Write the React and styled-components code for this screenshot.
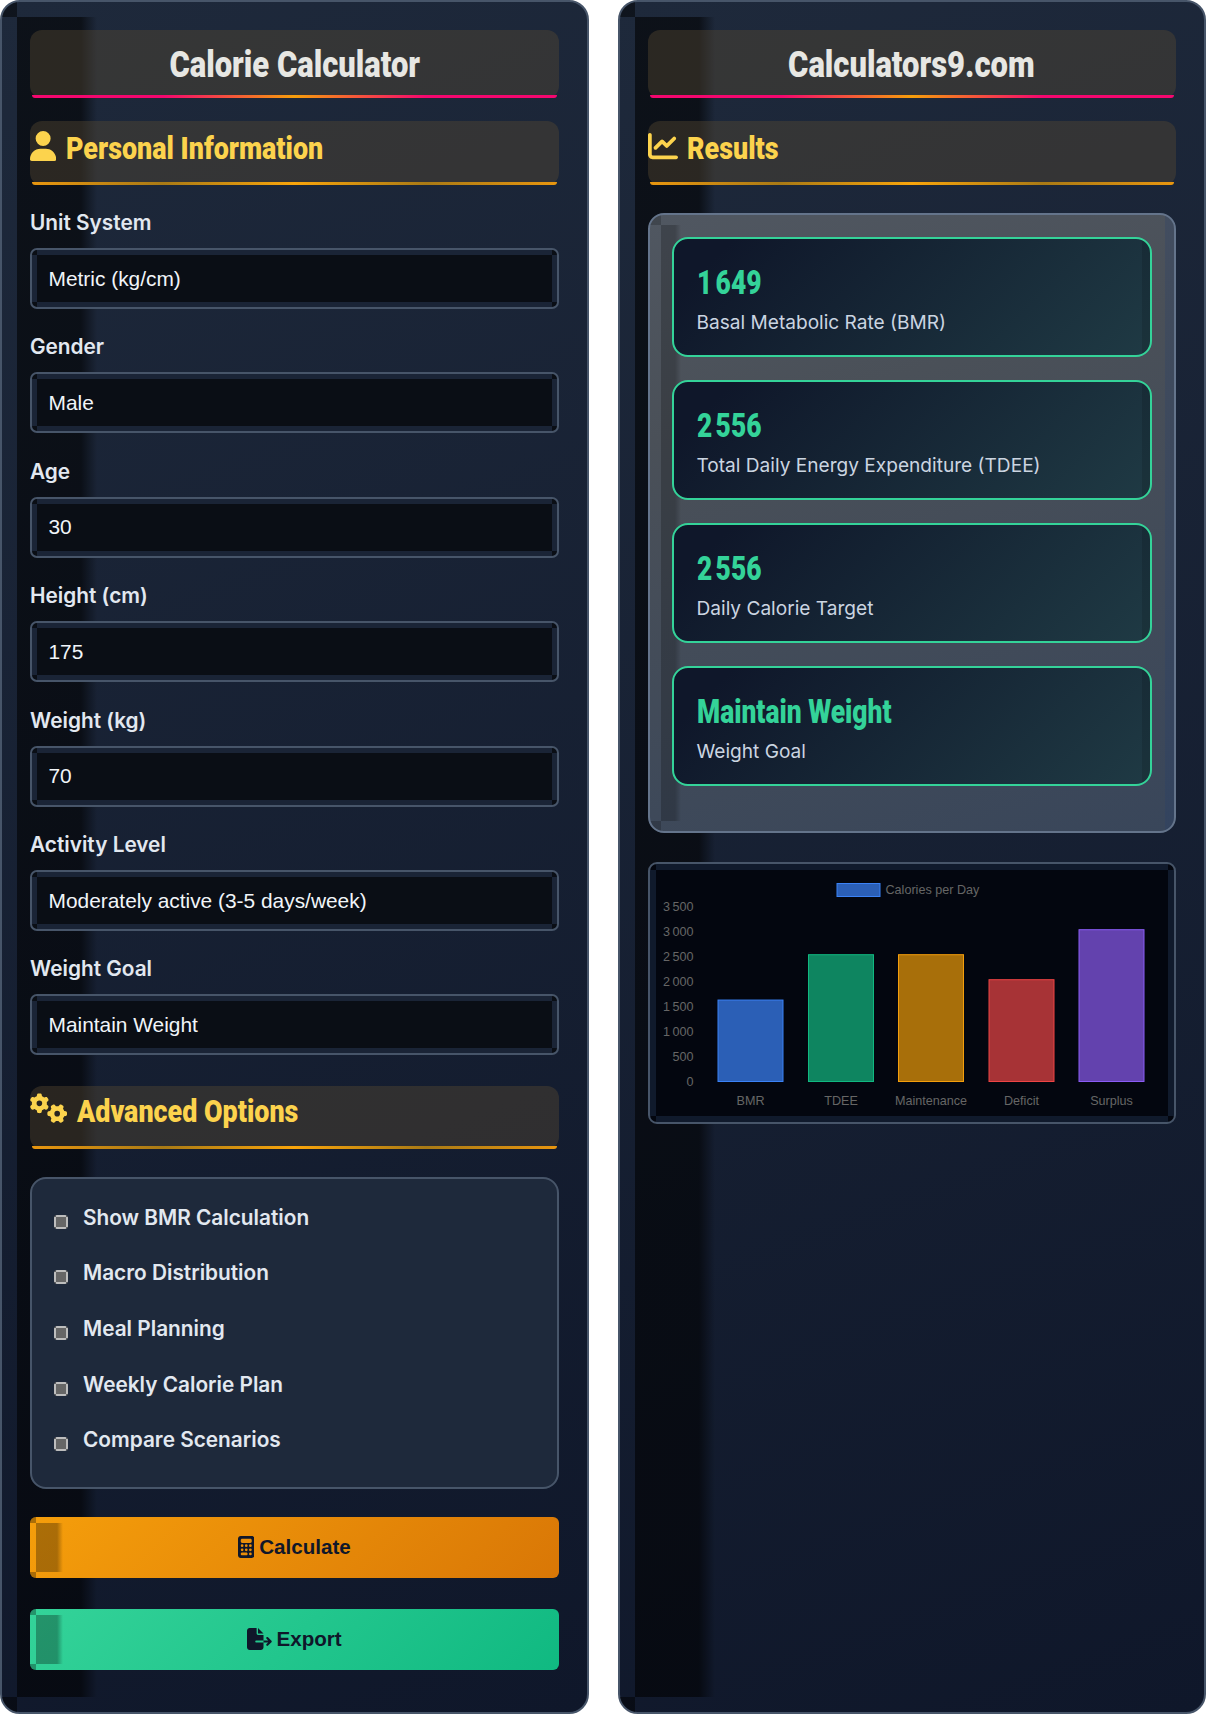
import React from 'react';
import styled, { createGlobalStyle, css } from 'styled-components';
import { FaUser, FaGears, FaChartLine, FaCalculator, FaFileExport } from 'react-icons/fa6';

const GlobalStyle = createGlobalStyle`
  * { box-sizing: border-box; }
  body {
    margin: 0;
    background: #fff;
    font-family: Inter, "Liberation Sans", sans-serif;
  }
`;

// the four edge bands, the corners keep the dark base colour
const edgeStrips = (color, w) => css`
  background-image:
    linear-gradient(${color}, ${color}),
    linear-gradient(${color}, ${color}),
    linear-gradient(${color}, ${color}),
    linear-gradient(${color}, ${color});
  background-repeat: no-repeat;
  background-position: top center, bottom center, left center, right center;
  background-size:
    calc(100% - ${w * 2}px) ${w}px,
    calc(100% - ${w * 2}px) ${w}px,
    ${w}px calc(100% - ${w * 2}px),
    ${w}px calc(100% - ${w * 2}px);
`;

const Page = styled.div`
  display: flex;
  gap: 29px;
  width: 1206px;
  min-height: 1714px;
`;

const Panel = styled.section`
  position: relative;
  flex: 1;
  height: 1714px;
  padding: 28px 28px 42px;
  border: 2px solid #475569;
  border-radius: 20px;
  overflow: hidden;
  background: linear-gradient(160deg, #1e293b 0%, #0f172a 100%);

  &::before {
    content: "";
    position: absolute;
    inset: 0;
    background:
      linear-gradient(rgba(0, 0, 0, 0.5), rgba(0, 0, 0, 0.5)) 0 0 / 15px 15px no-repeat,
      linear-gradient(rgba(0, 0, 0, 0.5), rgba(0, 0, 0, 0.5)) 0 100% / 15px 15px no-repeat,
      linear-gradient(90deg, rgba(0, 0, 0, 0.58) 80%, rgba(0, 0, 0, 0) 100%) 15px 15px / 80px calc(100% - 30px) no-repeat;
  }

  & > * {
    position: relative;
  }
`;

const Condensed = styled.span`
  display: inline-block;
  white-space: nowrap;
  transform: scaleX(${(p) => p.$sx || 0.82});
  transform-origin: ${(p) => p.$origin || 'left'} center;
`;

const Title = styled.h1`
  position: relative;
  height: 68px;
  margin: 0 0 23px;
  padding-top: 12px;
  border-radius: 12px;
  background: rgba(91, 75, 50, 0.4);
  color: #e7e7e3;
  font-family: Roboto, sans-serif;
  font-size: 36px;
  font-weight: 900;
  line-height: 46px;
  text-align: center;

  &::after {
    content: "";
    position: absolute;
    left: 2px;
    right: 2px;
    bottom: 0;
    height: 3px;
    border-radius: 0 0 12px 12px;
    background: linear-gradient(90deg, #f5076f 0%, #f5076f 25%, #f59e0b 50%, #f5076f 75%, #f5076f 100%);
  }
`;

const SectionTitle = styled.h2`
  position: relative;
  display: flex;
  align-items: flex-start;
  gap: 9.5px;
  height: ${(p) => (p.$short ? 63 : 64)}px;
  margin: ${(p) => (p.$short ? '30.4px 0 28px' : '0 0 24px')};
  padding-top: ${(p) => (p.$short ? 5 : 7)}px;
  border-radius: 12px;
  background: rgba(91, 75, 50, 0.4);
  color: #fcd34d;
  font-family: Roboto, sans-serif;
  font-size: 32px;
  font-weight: 900;
  line-height: 40px;

  svg {
    flex: none;
    width: ${(p) => p.$iconWidth}px;
    height: 30px;
    margin-top: ${(p) => (p.$short ? 2 : 3)}px;
  }

  &::after {
    content: "";
    position: absolute;
    left: 2px;
    right: 2px;
    bottom: 0;
    height: 3px;
    border-radius: 0 0 12px 12px;
    background: linear-gradient(90deg, #e8960f 0%, #a97a15 25%, #f9a50b 50%, #a97a15 75%, #e8960f 100%);
  }
`;

const Group = styled.div`
  margin-bottom: 24.4px;
`;

const Label = styled.label`
  display: block;
  height: 26px;
  margin-bottom: 13px;
  color: #e2e8f0;
  font-size: 20.8px;
  font-weight: 600;
  line-height: 28px;
`;

const Field = styled.input`
  display: block;
  width: 100%;
  height: 61px;
  padding: 0 16.5px;
  border: 2px solid #475569;
  border-radius: 7px;
  outline: none;
  appearance: none;
  background-color: #0a0e15;
  ${edgeStrips('#1a2436', 5)}
  color: #f1f5f9;
  font-family: "Liberation Sans", Arial, sans-serif;
  font-size: 20.9px;
`;

const Choice = styled(Field).attrs({ as: 'select' })``;

const OptionsCard = styled.div`
  height: 312px;
  margin-bottom: 28px;
  padding: 23px 22px 0;
  border: 2px solid #475569;
  border-radius: 16px;
  background: #1e293b;
`;

const OptionRow = styled.label`
  display: flex;
  gap: 15px;
  height: 32px;
  margin-bottom: 23.6px;
  color: #e2e8f0;
  font-size: 20.8px;
  font-weight: 600;
  line-height: 32px;
`;

const Check = styled.input.attrs({ type: 'checkbox' })`
  flex: none;
  width: 14px;
  height: 14px;
  margin: 13px 0 0;
  appearance: none;
  border-radius: 3px;
  background-color: #666;
  ${edgeStrips('#bdbdbd', 2)}
`;

const ActionButton = styled.button`
  position: relative;
  display: flex;
  align-items: center;
  justify-content: center;
  gap: 5px;
  width: 100%;
  height: 61.5px;
  margin-bottom: 30.5px;
  padding: 0;
  border: none;
  border-radius: 6px;
  overflow: hidden;
  background: linear-gradient(135deg, ${(p) => p.$from}, ${(p) => p.$to});
  color: #0f172a;
  font-family: "Liberation Sans", Arial, sans-serif;
  font-size: 20.6px;
  font-weight: 700;

  svg {
    width: ${(p) => p.$iconWidth}px;
    height: 22px;
  }

  &::before {
    content: "";
    position: absolute;
    inset: 0;
    background:
      linear-gradient(rgba(0, 0, 0, 0.3), rgba(0, 0, 0, 0.3)) 0 0 / 6px 6px no-repeat,
      linear-gradient(rgba(0, 0, 0, 0.3), rgba(0, 0, 0, 0.3)) 0 100% / 6px 6px no-repeat,
      linear-gradient(90deg, rgba(0, 0, 0, 0.3) 78%, rgba(0, 0, 0, 0) 100%) 6px 6px / 27px calc(100% - 12px) no-repeat;
  }
`;

const ResultsBox = styled.div`
  position: relative;
  height: 620px;
  margin: 28px 0 29px;
  padding: 22px 22.5px 0;
  border: 2px solid #64748b;
  border-radius: 16px;
  overflow: hidden;
  background: linear-gradient(165deg, #505761 0%, #4a5058 30%, #39465a 100%);

  &::before {
    content: "";
    position: absolute;
    inset: 0;
    background:
      linear-gradient(rgba(0, 0, 0, 0.2), rgba(0, 0, 0, 0.2)) 0 0 / 11px 10px no-repeat,
      linear-gradient(rgba(0, 0, 0, 0.2), rgba(0, 0, 0, 0.2)) 0 100% / 11px 10px no-repeat,
      linear-gradient(90deg, rgba(0, 0, 0, 0.22) 70%, rgba(0, 0, 0, 0) 100%) 11px 10px / 20px calc(100% - 20px) no-repeat,
      linear-gradient(rgba(30, 58, 110, 0.22), rgba(30, 58, 110, 0.22)) 100% 0 / 9px 100% no-repeat;
  }
`;

const ResultCard = styled.div`
  position: relative;
  height: 120px;
  margin-bottom: 23px;
  padding: 24px 22.5px 0;
  border: 2px solid #34d399;
  border-radius: 16px;
  overflow: hidden;
  background: linear-gradient(135deg, #0f172a 0%, #0f172a 10%, #1f3a44 100%);

  &::after {
    content: "";
    position: absolute;
    top: 0;
    bottom: 0;
    right: 0;
    width: 8px;
    background: rgba(0, 0, 0, 0.12);
  }
`;

const ResultValue = styled.div`
  height: 40px;
  color: #34d399;
  font-family: Roboto, sans-serif;
  font-size: 33px;
  font-weight: 900;
  line-height: 40px;
`;

const ResultLabel = styled.div`
  margin-top: 4.5px;
  color: #cbd5e1;
  font-size: 19.1px;
  line-height: 28px;
`;

const ChartBox = styled.div`
  height: 262px;
  border: 2px solid #475569;
  border-radius: 9px;
  overflow: hidden;
  background-color: #03060f;
  ${edgeStrips('#101a2c', 6)}

  svg {
    display: block;
  }

  text {
    fill: #666;
    font-family: "Liberation Sans", Arial, sans-serif;
    font-size: 12.6px;
  }
`;

const bars = [
  { name: 'BMR', value: 1649, x: 68, fill: '#2b5fb6', stroke: '#3b82f6' },
  { name: 'TDEE', value: 2556, x: 158.5, fill: '#0e8560', stroke: '#10b981' },
  { name: 'Maintenance', value: 2556, x: 248.5, fill: '#a86f0a', stroke: '#f59e0b' },
  { name: 'Deficit', value: 2056, x: 339, fill: '#a73336', stroke: '#ef4444' },
  { name: 'Surplus', value: 3056, x: 429, fill: '#6342ae', stroke: '#8b5cf6' },
];

const ticks = [0, 500, 1000, 1500, 2000, 2500, 3000, 3500];
const baseY = 217.5;
const toY = (v) => baseY - (v * 175) / 3500;
const fmt = (v) => String(v).replace(/(\d)(\d{3})$/, '$1\u202f$2');

const CalorieChart = () => (
  <svg width="525" height="258" viewBox="0 0 525 258">
    <rect x="187" y="19.5" width="43" height="13" fill="#2b5fb6" stroke="#3b82f6" />
    <text x="235.5" y="30">Calories per Day</text>
    {ticks.map((t) => (
      <text key={t} x="43.5" y={toY(t) + 4} textAnchor="end">{fmt(t)}</text>
    ))}
    {bars.map((b) => (
      <g key={b.name}>
        <rect x={b.x} y={toY(b.value) + 1} width="65" height={baseY - toY(b.value) - 1} fill={b.fill} stroke={b.stroke} />
        <text x={b.x + 32.5} y="241" textAnchor="middle">{b.name}</text>
      </g>
    ))}
  </svg>
);

const fields = [
  { label: 'Unit System', options: ['Metric (kg/cm)', 'Imperial (lb/in)'] },
  { label: 'Gender', options: ['Male', 'Female'] },
  { label: 'Age', value: '30' },
  { label: 'Height (cm)', value: '175' },
  { label: 'Weight (kg)', value: '70' },
  { label: 'Activity Level', options: ['Moderately active (3-5 days/week)'] },
  { label: 'Weight Goal', options: ['Maintain Weight'] },
];

const advanced = ['Show BMR Calculation', 'Macro Distribution', 'Meal Planning', 'Weekly Calorie Plan', 'Compare Scenarios'];

const results = [
  { value: '1\u202f649', label: 'Basal Metabolic Rate (BMR)' },
  { value: '2\u202f556', label: 'Total Daily Energy Expenditure (TDEE)' },
  { value: '2\u202f556', label: 'Daily Calorie Target' },
  { value: 'Maintain Weight', label: 'Weight Goal' },
];

const App = () => (
  <Page>
    <GlobalStyle />
    <Panel>
      <Title><Condensed $origin="center" $sx={0.86}>Calorie Calculator</Condensed></Title>
      <SectionTitle $iconWidth={26.25}>
        <FaUser />
        <Condensed $sx={0.84}>Personal Information</Condensed>
      </SectionTitle>
      {fields.map((f) => (
        <Group key={f.label}>
          <Label>{f.label}</Label>
          {f.options ? (
            <Choice defaultValue={f.options[0]}>
              {f.options.map((o) => <option key={o}>{o}</option>)}
            </Choice>
          ) : (
            <Field type="number" defaultValue={f.value} />
          )}
        </Group>
      ))}
      <SectionTitle $short $iconWidth={37.5}>
        <FaGears />
        <Condensed $sx={0.84}>Advanced Options</Condensed>
      </SectionTitle>
      <OptionsCard>
        {advanced.map((a) => (
          <OptionRow key={a}>
            <Check />
            {a}
          </OptionRow>
        ))}
      </OptionsCard>
      <ActionButton $from="#f59e0b" $to="#d97706" $iconWidth={16.5}><FaCalculator />Calculate</ActionButton>
      <ActionButton $from="#34d399" $to="#10b981" $iconWidth={24.75}><FaFileExport />Export</ActionButton>
    </Panel>
    <Panel>
      <Title><Condensed $origin="center" $sx={0.86}>Calculators9.com</Condensed></Title>
      <SectionTitle $iconWidth={30}>
        <FaChartLine />
        <Condensed $sx={0.84}>Results</Condensed>
      </SectionTitle>
      <ResultsBox>
        {results.map((r) => (
          <ResultCard key={r.label}>
            <ResultValue><Condensed $sx={0.8}>{r.value}</Condensed></ResultValue>
            <ResultLabel>{r.label}</ResultLabel>
          </ResultCard>
        ))}
      </ResultsBox>
      <ChartBox>
        <CalorieChart />
      </ChartBox>
    </Panel>
  </Page>
);

export default App;
